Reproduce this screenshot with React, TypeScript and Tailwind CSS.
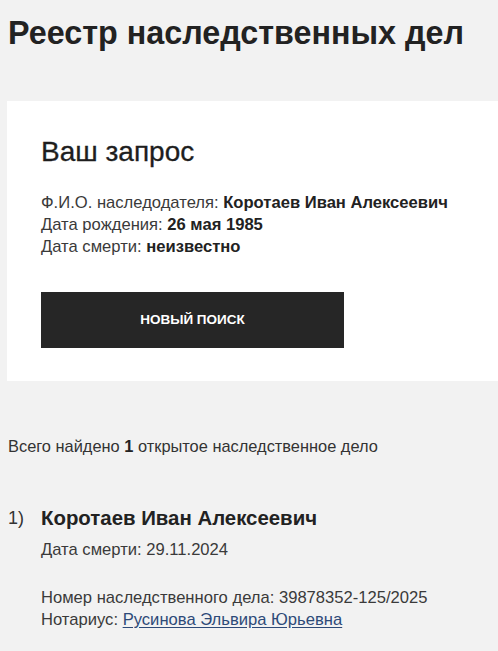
export default function App() {
  return (
    <div className="min-h-[651px] overflow-hidden bg-[#f2f2f2] font-['Liberation_Sans',Arial,sans-serif] text-[#222]">
      <h1 className="pl-2 pt-[14px] text-[32.3px] font-bold leading-[38px] text-[#222]">
        Реестр наследственных дел
      </h1>

      <div className="ml-[7px] mt-[49px] bg-white pb-[33px] pl-[34px] pt-[36px]">
        <h2 className="text-[28px] font-normal leading-[30px] text-[#1e1e1e] [-webkit-text-stroke:0.3px_#1e1e1e]">
          Ваш запрос
        </h2>
        <div className="mt-[25px] text-[16.6px] font-light leading-[22px] text-[#3a3a3a]">
          <p>
            Ф.И.О. наследодателя: <b className="font-bold text-[#222]">Коротаев Иван Алексеевич</b>
          </p>
          <p>
            Дата рождения: <b className="font-bold text-[#222]">26 мая 1985</b>
          </p>
          <p>
            Дата смерти: <b className="font-bold text-[#222]">неизвестно</b>
          </p>
        </div>
        <button className="mt-[34px] flex h-[56px] w-[303px] items-center justify-center bg-[#262626] text-[13.5px] font-bold uppercase text-white">
          Новый поиск
        </button>
      </div>

      <p className="mt-[54px] pl-2 text-[16.4px] leading-[22px] text-[#333]">
        Всего найдено <b className="font-bold text-[#222]">1</b> открытое наследственное дело
      </p>

      <div className="mt-[48px] flex pl-2">
        <div className="w-[33px] text-[18px] leading-[26px] text-[#333]">1)</div>
        <div>
          <div className="text-[20.4px] font-bold leading-[26px] text-[#222]">Коротаев Иван Алексеевич</div>
          <p className="mt-[8px] text-[16.6px] leading-[22px] text-[#3a3a3a]">Дата смерти: 29.11.2024</p>
          <div className="mt-[26px] text-[16.6px] leading-[22px] text-[#3a3a3a]">
            <p>Номер наследственного дела: 39878352-125/2025</p>
            <p>
              Нотариус:{" "}
              <a href="#" className="text-[#2d4a78] underline underline-offset-2">
                Русинова Эльвира Юрьевна
              </a>
            </p>
          </div>
        </div>
      </div>
    </div>
  );
}
